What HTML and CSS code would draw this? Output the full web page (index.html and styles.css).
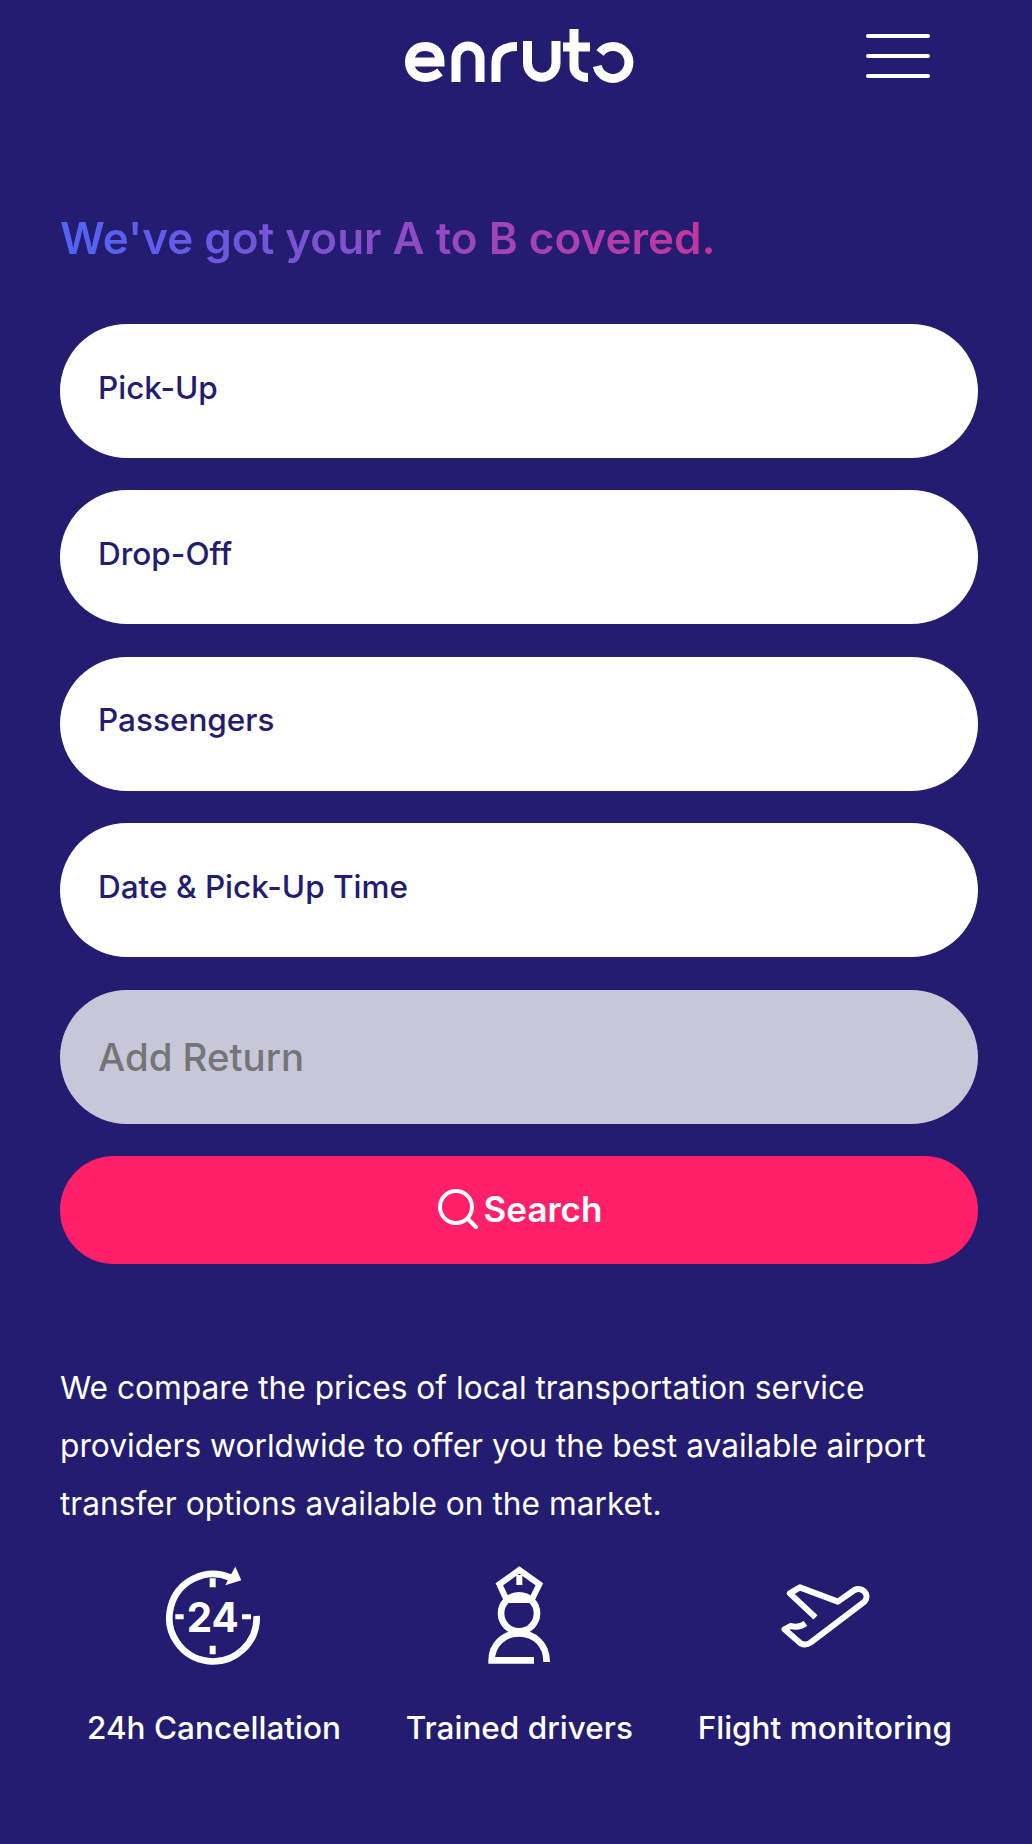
FILE: index.html
```html
<!DOCTYPE html>
<html lang="en">
<head>
<meta charset="utf-8">
<title>enruto</title>
<link rel="stylesheet" href="styles.css">
</head>
<body>
<div class="page">
  <header class="header">
    <svg class="logo" viewBox="400 25 240 65" role="img" aria-label="enruto" fill="none" stroke="#fff" stroke-width="9">
      <path d="M411 62H440C440 50 432 46.500 425 46.500C415 46.500 409.500 54 409.500 62C409.500 71 416 77.500 425 77.500C431 77.500 435 76 440 72"/>
      <path d="M456 82V58A12 12 0 0 1 480 58V82"/>
      <path d="M496 82V62C496 52 503 46.500 517 46.500"/>
      <path d="M527.500 41V63A14.250 14.250 0 0 0 556 63V41"/>
      <path d="M574 29V66C574 73 579 77.500 588 77.500"/>
      <path d="M563 47H590"/>
      <path d="M600 53A16 16 0 1 1 597.300 66"/>
    </svg>
    <button class="menu" aria-label="Menu"><span></span><span></span><span></span></button>
  </header>

  <h1 class="headline"><span class="headline-text">We've got your A to B covered.</span></h1>

  <form class="form">
    <div class="field">Pick-Up</div>
    <div class="field">Drop-Off</div>
    <div class="field">Passengers</div>
    <div class="field">Date &amp; Pick-Up Time</div>
    <div class="field field-off">Add Return</div>
    <div class="search">
      <svg class="search-icon" viewBox="0 0 40 40" fill="none" stroke="#fff" stroke-width="4" stroke-linecap="round"><circle cx="18" cy="18" r="16"/><path d="M30 30L38 38"/></svg>
      <span>Search</span>
    </div>
  </form>

  <p class="intro">We compare the prices of local transportation service providers worldwide to offer you the best available airport transfer options available on the market.</p>

  <section class="features">
    <div class="feature">
      <svg class="icon" viewBox="24 30 390 330" fill="none" stroke="#fff" stroke-width="20">
        <path d="M347 198A131 131 0 1 1 268 83"/>
        <path d="M283 50L301 91L253 106L262 88Z" fill="#fff" stroke="none"/>
        <path d="M206 85H224V112H206ZM206 287H224V313H206ZM103 193H128V208H103ZM303 193H330V208H303Z" fill="#fff" stroke="none"/>
        <text class="icon-text" x="215" y="247">24</text>
      </svg>
      <span class="feature-label">24h Cancellation</span>
    </div>
    <div class="feature">
      <svg class="icon" viewBox="-18 30 390 330" fill="none" stroke="#fff" stroke-width="18">
        <path d="M178 60L118 103L140 150H215L238 103Z"/>
        <path d="M178 75V105"/>
        <circle cx="177" cy="190" r="54" stroke-width="20"/>
        <path d="M222 331H95C95 285 130 250 177 250C225 250 260 285 260 336" stroke-width="20"/>
      </svg>
      <span class="feature-label">Trained drivers</span>
    </div>
    <div class="feature">
      <svg class="icon" viewBox="-1.500 0 390 330" fill="none" stroke="#fff" stroke-width="18" stroke-linejoin="round">
        <path d="M165 172L88 100L118 82L232 125L282 90C305 78 330 105 312 125L150 248C140 255 130 255 120 250L72 208L90 198C105 202 122 200 135 190"/>
      </svg>
      <span class="feature-label">Flight monitoring</span>
    </div>
  </section>
</div>
</body>
</html>
```

FILE: styles.css
```css
* { box-sizing: border-box; }
html, body { margin: 0; padding: 0; }
body {
  background: #231c70;
  font-family: "Inter", "Liberation Sans", sans-serif;
  color: #fff;
}
.page { min-height: 1844px; padding: 0 54px 0 60px; display: flex; flex-direction: column; }
.header { height: 100px; display: flex; align-items: flex-start; }
.logo { width: 240px; height: 65px; margin: 25px 0 0 340px; overflow: visible; }
.menu {
  width: 64px; height: 44px; margin: 34px 0 0 226px;
  padding: 0; border: 0; background: none;
  display: flex; flex-direction: column; justify-content: space-between;
}
.menu span { display: block; height: 4px; background: #fff; border-radius: 2px; }
.headline { margin: 112px 0 0; font-size: 44px; font-weight: 600; line-height: 52px; }
.headline-text {
  display: inline-block;
  background: linear-gradient(90deg, #4f64f6 0%, #c6359b 100%);
  -webkit-background-clip: text; background-clip: text;
  color: transparent;
}
.form { margin-top: 60px; display: flex; flex-direction: column; gap: 32.400px; }
.field {
  height: 134px; border-radius: 67px; background: #fff; color: #231c70;
  font-size: 31.500px; font-weight: 500; padding: 0 38px 8px;
  display: flex; align-items: center;
}
.field-off { background: #c8c7da; color: #757575; font-size: 38.400px; padding-bottom: 0; }
.search {
  height: 108px; border-radius: 54px; background: #ff2069; color: #fff; padding: 0 0 2px 2px;
  font-size: 35px; font-weight: 600; display: flex; align-items: center; justify-content: center; gap: 6px;
}
.search-icon { width: 40px; height: 40px; }
.intro { margin: 95px 0 0; font-size: 31.700px; line-height: 58px; font-weight: 400; }
.features { margin: 27px 26px 0 27px; display: flex; justify-content: space-between; }
.feature { display: flex; flex-direction: column; align-items: center; gap: 38px; }
.icon { width: 130px; height: 110px; overflow: visible; }
.icon-text { font-family: "Inter", "Liberation Sans", sans-serif; font-size: 121px; font-weight: 700; fill: #fff; stroke: none; text-anchor: middle; }
.feature-label { font-size: 31.500px; font-weight: 500; white-space: nowrap; }
```
